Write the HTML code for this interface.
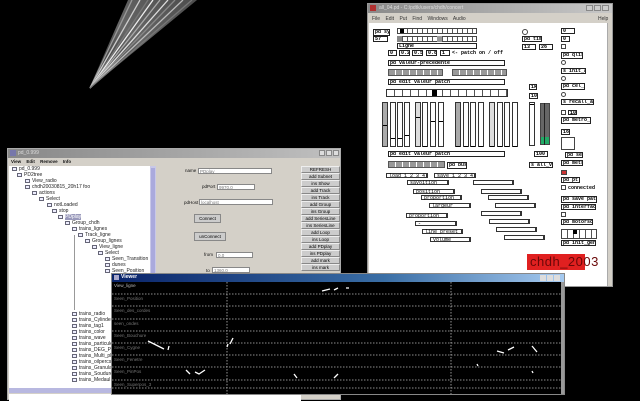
<!DOCTYPE html>
<html><head><meta charset="utf-8"><style>
*{margin:0;padding:0;box-sizing:border-box}
body{width:640px;height:400px;background:#000;position:relative;overflow:hidden;font-family:"Liberation Sans",sans-serif}
div{position:absolute}
.o{border:1px solid #222;background:#fff;font:bold 5px "Liberation Mono",monospace;line-height:4px;padding-left:1px;color:#000;white-space:nowrap;overflow:hidden}
.t{border:1px solid #444;background:#fff;width:5px;height:5px}
.m{border:1px solid #333;border-right-width:2px;background:#fff;height:5px;font:5px "Liberation Mono",monospace;line-height:4px;padding-left:2px}
.vs{border:1px solid #333;background:#fff;width:6px;height:45px}
.vs i{position:absolute;left:0;width:100%;height:1px;background:#000}
.tr{font:5px "Liberation Sans",sans-serif;line-height:6px;white-space:nowrap;color:#222}
.tr b{display:inline-block;width:5px;height:4px;border:1px solid #667;background:#eef;margin-right:2px;vertical-align:middle}
.bt{left:301px;width:39px;height:7px;background:#ccc;border:1px solid #eee;border-right-color:#888;border-bottom-color:#888;font:4.5px "Liberation Sans",sans-serif;text-align:center;line-height:5px;color:#000}
.in{background:#fff;border:1px solid #888;height:6px;font:4.5px "Liberation Sans",sans-serif;line-height:5px;padding-left:1px;color:#777}
.lb{font:4.5px "Liberation Sans",sans-serif;color:#111}
</style></head><body>

<svg style="position:absolute;left:0;top:0" width="640" height="400">
<defs><linearGradient id="g" x1="0" y1="1" x2="1" y2="0"><stop offset="0" stop-color="#333"/><stop offset="0.5" stop-color="#888"/><stop offset="1" stop-color="#666"/></linearGradient></defs>
<polygon points="89,89 128,0 197,0" fill="url(#g)" opacity="0.75"/>
<g stroke-width="1.3">
<line x1="90" y1="88" x2="132" y2="0" stroke="#999"/>
<line x1="90" y1="88" x2="140" y2="0" stroke="#ccc"/>
<line x1="90" y1="88" x2="148" y2="0" stroke="#777"/>
<line x1="90" y1="88" x2="153" y2="0" stroke="#eee"/>
<line x1="90" y1="88" x2="160" y2="0" stroke="#aaa"/>
<line x1="90" y1="88" x2="168" y2="0" stroke="#ddd"/>
<line x1="90" y1="88" x2="175" y2="0" stroke="#888"/>
<line x1="90" y1="88" x2="183" y2="0" stroke="#bbb"/>
<line x1="90" y1="88" x2="192" y2="0" stroke="#777"/>
</g>
</svg>

<div style="left:367px;top:3px;width:246px;height:284px;background:#d4d0c8;border:1px solid #999">
 <div style="left:0;top:0;width:244px;height:9px;background:linear-gradient(90deg,#8a8a8a,#c8c8c8)"><div style="left:2px;top:1px;width:6px;height:6px;background:#b03030"></div><div style="left:11px;top:1px;font:5px 'Liberation Sans';color:#ddd">all_04.pd - C:/pdtk/users/chdh/concert</div>
 <div style="left:218px;top:1px;width:7px;height:6px;background:#ccc;border:1px solid #888"></div><div style="left:226px;top:1px;width:7px;height:6px;background:#ccc;border:1px solid #888"></div><div style="left:234px;top:1px;width:7px;height:6px;background:#ccc;border:1px solid #888"></div></div>
 <div style="left:4px;top:12px;font:5px 'Liberation Sans';color:#333;word-spacing:4px">File Edit Put Find Windows Audio</div>
 <div style="left:230px;top:12px;font:5px 'Liberation Sans';color:#333">Help</div>
 <div style="left:1px;top:19px;width:238px;height:263px;background:#fff"></div>
 <div style="left:239px;top:19px;width:5px;height:263px;background:#d4d0c8;border-left:1px solid #aaa"></div>
</div>
<div class="o" style="left:373px;top:29px;width:17px;height:7px">pd sys</div>
<div class="o" style="left:373px;top:36px;width:15px;height:6px">57</div>
<div style="left:397px;top:28px;width:80px;height:6px;border:1px solid #444;background:repeating-linear-gradient(90deg,#fff 0 4px,#555 4px 5px)"></div>
<div style="left:400px;top:29px;width:4px;height:4px;background:#000"></div>
<div style="left:397px;top:36px;width:80px;height:6px;border:1px solid #444;background:repeating-linear-gradient(90deg,#fff 0 4px,#555 4px 5px)"></div>
<div style="left:397px;top:36px;width:5px;height:6px;background:#888"></div><div style="left:437px;top:36px;width:5px;height:6px;background:#999"></div>
<div class="o" style="left:397px;top:43px;width:80px;height:6px">Ligne</div>
<div class="o" style="left:388px;top:50px;width:9px;height:6px">0</div>
<div class="o" style="left:399px;top:50px;width:11px;height:6px">0.2</div>
<div class="o" style="left:412px;top:50px;width:11px;height:6px">0.5</div>
<div class="o" style="left:426px;top:50px;width:11px;height:6px">0.8</div>
<div class="o" style="left:440px;top:50px;width:10px;height:6px">1</div>
<div style="left:452px;top:50px;font:bold 5px 'Liberation Mono';color:#000">&lt;- patch on / off</div>
<div class="o" style="left:388px;top:60px;width:117px;height:6px">pd valeur-precedente</div>
<div style="left:388px;top:69px;width:55px;height:7px;background:repeating-linear-gradient(90deg,#999 0 6px,#fff 6px 7px);border:1px solid #555"></div>
<div style="left:452px;top:69px;width:55px;height:7px;background:repeating-linear-gradient(90deg,#999 0 6px,#fff 6px 7px);border:1px solid #555"></div>
<div class="o" style="left:388px;top:79px;width:117px;height:6px">pd edit valeur patch</div>
<div style="left:386px;top:89px;width:122px;height:8px;border:1px solid #333;background:repeating-linear-gradient(90deg,#fff 0 7px,#555 7px 8px)"></div>
<div style="left:432px;top:90px;width:5px;height:6px;background:#000"></div>
<div class="vs" style="left:382px;top:102px;background:#aaa"><i style="top:22px"></i></div>
<div class="vs" style="left:390px;top:102px"><i style="top:35px"></i></div>
<div class="vs" style="left:397px;top:102px"><i style="top:35px"></i></div>
<div class="vs" style="left:404px;top:102px"><i style="top:32px"></i></div>
<div class="vs" style="left:415px;top:102px;background:#ddd"><i style="top:14px"></i></div>
<div class="vs" style="left:422px;top:102px"><i style="top:43px"></i></div>
<div class="vs" style="left:430px;top:102px"><i style="top:18px"></i></div>
<div class="vs" style="left:438px;top:102px"><i style="top:18px"></i></div>
<div class="vs" style="left:455px;top:102px;background:#aaa"><i style="top:43px"></i></div>
<div class="vs" style="left:463px;top:102px"><i style="top:43px"></i></div>
<div class="vs" style="left:470px;top:102px"><i style="top:43px"></i></div>
<div class="vs" style="left:478px;top:102px"><i style="top:43px"></i></div>
<div class="vs" style="left:489px;top:102px;background:#ddd"><i style="top:43px"></i></div>
<div class="vs" style="left:497px;top:102px"><i style="top:43px"></i></div>
<div class="vs" style="left:504px;top:102px"><i style="top:43px"></i></div>
<div class="vs" style="left:512px;top:102px"><i style="top:43px"></i></div>
<div class="o" style="left:388px;top:151px;width:117px;height:6px">pd edit valeur patch</div>
<div style="left:388px;top:161px;width:57px;height:7px;background:repeating-linear-gradient(90deg,#999 0 6px,#fff 6px 7px);border:1px solid #555"></div>
<div class="o" style="left:447px;top:162px;width:20px;height:7px">pd busy</div>
<div class="m" style="left:386px;top:173px;width:42px">load 1 2 3 4</div>
<div class="m" style="left:434px;top:173px;width:42px">save 1 2 3 4</div>
<div class="m" style="left:407px;top:180px;width:42px">savoition</div>
<div class="m" style="left:413px;top:189px;width:42px">position</div>
<div class="m" style="left:421px;top:195px;width:41px">proportion</div>
<div class="m" style="left:429px;top:203px;width:42px">largeur</div>
<div class="m" style="left:406px;top:213px;width:42px">proportion</div>
<div class="m" style="left:415px;top:221px;width:42px">-</div>
<div class="m" style="left:422px;top:229px;width:41px">line preset</div>
<div class="m" style="left:430px;top:237px;width:41px">volume</div>
<div class="m" style="left:473px;top:180px;width:41px"></div>
<div class="m" style="left:481px;top:189px;width:41px"></div>
<div class="m" style="left:488px;top:195px;width:41px"></div>
<div class="m" style="left:495px;top:203px;width:41px"></div>
<div class="m" style="left:481px;top:211px;width:41px"></div>
<div class="m" style="left:489px;top:219px;width:41px"></div>
<div class="m" style="left:496px;top:227px;width:41px"></div>
<div class="m" style="left:504px;top:235px;width:41px"></div>
<div style="left:522px;top:29px;width:6px;height:6px;border:1px solid #444;border-radius:50%;background:#fff"></div>
<div class="o" style="left:522px;top:36px;width:20px;height:6px">pd time</div>
<div class="o" style="left:522px;top:44px;width:14px;height:6px">13</div>
<div class="o" style="left:539px;top:44px;width:14px;height:6px">26</div>
<div class="o" style="left:529px;top:84px;width:8px;height:6px">1k</div>
<div class="o" style="left:529px;top:93px;width:9px;height:6px">100</div>
<div class="vs" style="left:529px;top:102px;height:44px;width:6px"><i style="top:1px"></i></div>
<div style="left:540px;top:103px;width:10px;height:42px;background:linear-gradient(#666 0 82%,#2a6 82%);border:1px solid #444"></div>
<div style="left:544px;top:103px;width:1px;height:42px;background:#222"></div>
<div class="o" style="left:534px;top:151px;width:14px;height:6px">100</div>
<div class="o" style="left:529px;top:162px;width:24px;height:6px">s all_vol</div>
<div class="o" style="left:561px;top:28px;width:14px;height:6px">0</div>
<div class="o" style="left:561px;top:36px;width:9px;height:6px">0</div>
<div class="t" style="left:561px;top:44px"></div>
<div class="o" style="left:561px;top:52px;width:22px;height:7px">pd qlist</div>
<div class="t" style="left:561px;top:60px;border-radius:50%"></div>
<div class="o" style="left:561px;top:68px;width:25px;height:6px">s init_all</div>
<div class="t" style="left:561px;top:76px;border-radius:50%"></div>
<div class="o" style="left:561px;top:83px;width:24px;height:7px">pd cel_md</div>
<div class="t" style="left:561px;top:92px;border-radius:50%"></div>
<div class="o" style="left:561px;top:99px;width:33px;height:6px">s recall_all</div>
<div class="t" style="left:561px;top:110px"></div><div class="o" style="left:568px;top:110px;width:9px;height:5px">100</div>
<div class="o" style="left:561px;top:117px;width:30px;height:7px">pd metro_mp</div>
<div class="o" style="left:561px;top:129px;width:9px;height:6px">164</div>
<div style="left:561px;top:137px;width:14px;height:13px;border:1px solid #444;background:#fff"></div>
<div class="o" style="left:565px;top:152px;width:18px;height:6px">pd seq</div>
<div class="o" style="left:561px;top:160px;width:22px;height:6px">pd metro</div>
<div style="left:561px;top:170px;width:6px;height:5px;background:#c33;border:1px solid #444"></div>
<div class="o" style="left:561px;top:177px;width:19px;height:6px">pd ptl</div>
<div class="t" style="left:561px;top:185px"></div><div style="left:568px;top:185px;font:bold 5px 'Liberation Mono'">connected</div>
<div class="o" style="left:561px;top:196px;width:36px;height:7px">pd save patch</div>
<div class="o" style="left:561px;top:204px;width:35px;height:6px">pd interface</div>
<div class="t" style="left:561px;top:212px"></div>
<div class="o" style="left:561px;top:219px;width:32px;height:6px">pd motorsolo</div>
<div style="left:561px;top:229px;width:36px;height:10px;border:1px solid #444;background:repeating-linear-gradient(90deg,#fff 0 5px,#555 5px 6px)"></div>
<div style="left:573px;top:230px;width:4px;height:4px;background:#000"></div>
<div class="o" style="left:561px;top:240px;width:35px;height:6px">pd init_gen</div>
<div style="left:527px;top:254px;width:58px;height:16px;background:#e02020"></div>
<div style="left:530px;top:254px;font:13px 'Liberation Sans';color:#6a0808;letter-spacing:0.5px">chdh_2003</div>

<div style="left:7px;top:148px;width:334px;height:252px;background:#d4d0c8;border:1px solid #aaa">
 <div style="left:0;top:0;width:332px;height:9px;background:linear-gradient(90deg,#888,#c0c0c0)"><div style="left:2px;top:1px;width:6px;height:6px;background:#77a"></div><div style="left:10px;top:1px;font:5px 'Liberation Sans';color:#ddd">pd_0.999</div>
 <div style="left:311px;top:1px;width:6px;height:6px;background:#ddd;border:1px solid #888"></div><div style="left:318px;top:1px;width:6px;height:6px;background:#ddd;border:1px solid #888"></div><div style="left:325px;top:1px;width:6px;height:6px;background:#ddd;border:1px solid #888"></div></div>
 <div style="left:3px;top:10px;font:bold 4.5px 'Liberation Sans';color:#111;word-spacing:4px">View Edit Remove Info</div>
 <div style="left:1px;top:17px;width:141px;height:222px;background:#fff"></div>
 <div style="left:142px;top:17px;width:6px;height:222px;background:#c8c8e8"><div style="left:1px;top:2px;width:4px;height:165px;background:#aaaadd"></div></div>
 <div style="left:1px;top:239px;width:147px;height:5px;background:#b8b8e0"></div>
 <div style="left:1px;top:245px;width:292px;height:7px;background:#fff"></div>
</div>
<div class="tr" style="left:12px;top:166px"><b></b>pd_0.999</div>
<div class="tr" style="left:17px;top:172px"><b></b>PD2tree</div>
<div class="tr" style="left:25px;top:178px"><b></b>View_radio</div>
<div class="tr" style="left:25px;top:184px"><b></b>chdh20030815_20h17 foo</div>
<div class="tr" style="left:32px;top:190px"><b></b>actions</div>
<div class="tr" style="left:39px;top:196px"><b></b>Select</div>
<div class="tr" style="left:47px;top:202px"><b></b>notLoaded</div>
<div class="tr" style="left:52px;top:208px"><b></b>stop</div>
<div class="tr" style="left:58px;top:214px"><b></b><span style="background:#99b;color:#fff">PDplay</span></div>
<div class="tr" style="left:65px;top:220px"><b></b>Group_chdh</div>
<div class="tr" style="left:72px;top:226px"><b></b>trains_lignes</div>
<div class="tr" style="left:78px;top:232px"><b></b>Track_ligne</div>
<div class="tr" style="left:85px;top:238px"><b></b>Group_lignes</div>
<div class="tr" style="left:92px;top:244px"><b></b>View_ligne</div>
<div class="tr" style="left:98px;top:250px"><b></b>Select</div>
<div class="tr" style="left:105px;top:256px"><b></b>Seen_Transition</div>
<div class="tr" style="left:105px;top:262px"><b></b>dunes</div>
<div class="tr" style="left:105px;top:268px"><b></b>Seen_Position</div>
<div class="tr" style="left:72px;top:311px"><b></b>trains_radio</div>
<div class="tr" style="left:72px;top:317px"><b></b>trains_Cylinder</div>
<div class="tr" style="left:72px;top:323px"><b></b>trains_tag1</div>
<div class="tr" style="left:72px;top:329px"><b></b>trains_color</div>
<div class="tr" style="left:72px;top:335px"><b></b>trains_wave</div>
<div class="tr" style="left:72px;top:341px"><b></b>trains_particule</div>
<div class="tr" style="left:72px;top:347px"><b></b>trains_DEG_Po</div>
<div class="tr" style="left:72px;top:353px"><b></b>trains_Multi_pl</div>
<div class="tr" style="left:72px;top:359px"><b></b>trains_oilpercs</div>
<div class="tr" style="left:72px;top:365px"><b></b>trains_Granula</div>
<div class="tr" style="left:72px;top:371px"><b></b>trains_Soudure</div>
<div class="tr" style="left:72px;top:377px"><b></b>trains_Medaul</div>
<div style="left:74px;top:235px;width:1px;height:75px;background:#999"></div>
<div class="lb" style="left:185px;top:168px">name</div><div class="in" style="left:198px;top:168px;width:74px">PDplay</div>
<div class="lb" style="left:202px;top:184px">pdPort</div><div class="in" style="left:217px;top:184px;width:38px">9970.0</div>
<div class="lb" style="left:184px;top:200px">pdHost</div><div class="in" style="left:199px;top:199px;width:74px">localhost</div>
<div class="bt" style="left:194px;top:214px;width:27px;height:9px;line-height:7px;border:1px solid #888">Connect</div>
<div class="bt" style="left:194px;top:232px;width:32px;height:9px;line-height:7px;border:1px solid #888">unConnect</div>
<div class="lb" style="left:204px;top:252px">from</div><div class="in" style="left:216px;top:252px;width:37px">0.0</div>
<div class="lb" style="left:206px;top:268px">to</div><div class="in" style="left:212px;top:267px;width:38px">1360.0</div>
<div class="bt" style="top:166px">REFRESH</div>
<div class="bt" style="top:173px">add Subnet</div>
<div class="bt" style="top:180px">ins Show</div>
<div class="bt" style="top:187px">add Track</div>
<div class="bt" style="top:194px">ins Track</div>
<div class="bt" style="top:201px">add Group</div>
<div class="bt" style="top:208px">ins Group</div>
<div class="bt" style="top:215px">add SeriesLine</div>
<div class="bt" style="top:222px">ins SeriesLine</div>
<div class="bt" style="top:229px">add Loop</div>
<div class="bt" style="top:236px">ins Loop</div>
<div class="bt" style="top:243px">add PDplay</div>
<div class="bt" style="top:250px">ins PDplay</div>
<div class="bt" style="top:257px">add mark</div>
<div class="bt" style="top:264px">ins mark</div>

<div style="left:111px;top:273px;width:454px;height:122px;background:#000;border:1px solid #888">
 <div style="left:0;top:0;width:452px;height:8px;background:linear-gradient(90deg,#0a246a,#3a6ea5 60%,#a6caf0)"><div style="left:2px;top:1px;width:5px;height:5px;background:#aac"></div><div style="left:9px;top:0;font:bold 5px 'Liberation Sans';color:#fff">Viewer</div>
 <div style="left:428px;top:1px;width:6px;height:6px;background:#ddd"></div><div style="left:435px;top:1px;width:6px;height:6px;background:#ddd"></div><div style="left:442px;top:1px;width:6px;height:6px;background:#ddd"></div></div>
 <div style="right:0;top:8px;width:3px;height:112px;background:#999"></div>
</div>
<svg style="position:absolute;left:112px;top:282px" width="450" height="112">
<g stroke="#bbb" stroke-width="0.8" stroke-dasharray="1.5 1.5">
<line x1="0" y1="12" x2="450" y2="12"/><line x1="0" y1="24" x2="450" y2="24"/><line x1="0" y1="37" x2="450" y2="37"/><line x1="0" y1="49" x2="450" y2="49"/><line x1="0" y1="61" x2="450" y2="61"/><line x1="0" y1="73" x2="450" y2="73"/><line x1="0" y1="85" x2="450" y2="85"/><line x1="0" y1="98" x2="450" y2="98"/><line x1="0" y1="106" x2="450" y2="106"/>
<line x1="115" y1="0" x2="115" y2="112"/><line x1="339" y1="0" x2="339" y2="112"/>
</g>
<g stroke="#fff" stroke-width="1.3" fill="none">
<path d="M36 59 L52 67"/><path d="M56 68 L57 64"/><path d="M118 62 L121 56"/><path d="M115 65 L116 62"/>
<path d="M74 88 L78 92 M83 90 L87 92 L93 88"/><path d="M182 92 L185 96"/><path d="M222 96 L226 92"/>
<path d="M210 9 L218 7 M222 8 L226 6 M234 6 L237 6"/>
<path d="M385 69 L392 71 M396 68 L402 65 M420 64 L425 70"/>
<path d="M420 89 L421 91 M365 82 L366 84"/>
</g>
<g fill="#777" font-size="4.5" font-family="Liberation Sans">
<text x="2" y="5" fill="#bbb">View_ligne</text>
<text x="2" y="18">Seen_Position</text><text x="2" y="30">Seen_des_cordes</text><text x="2" y="43">seen_ondes</text><text x="2" y="55">Seen_Bouchure</text><text x="2" y="67">Seen_Cygne</text><text x="2" y="79">Seen_Fenetre</text><text x="2" y="91">Seen_PinPos</text><text x="2" y="104">Seen_Superpos_3</text>
</g>
</svg>
</body></html>
